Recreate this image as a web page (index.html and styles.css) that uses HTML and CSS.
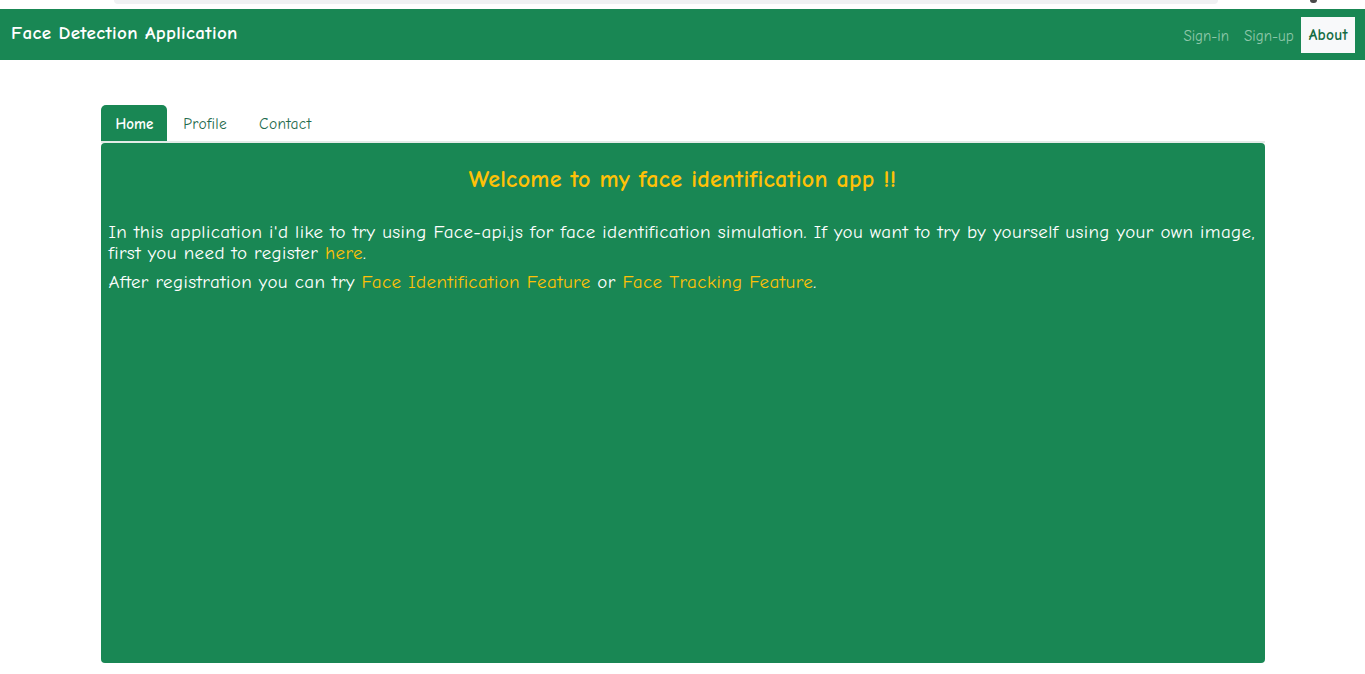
FILE: index.html
```html
<!DOCTYPE html>
<html>
<head>
<meta charset="utf-8">
<link rel="stylesheet" href="styles.css">
</head>
<body>
<div class="topstrip"><div class="topstrip-bar"></div><div class="topstrip-dot"></div></div>
<nav class="navbar">
  <div class="brand">Face Detection Application</div>
  <div class="navlinks">
    <a class="navlink">Sign-in</a>
    <a class="navlink">Sign-up</a>
    <a class="navlink active">About</a>
  </div>
</nav>
<main class="container">
  <ul class="tabs">
    <li class="tab active">Home</li>
    <li class="tab">Profile</li>
    <li class="tab">Contact</li>
  </ul>
  <section class="panel">
    <h2 class="title">Welcome to my face identification app !!</h2>
    <p class="text">In this application i'd like to try using Face-api.js for face identification simulation. If you want to try by yourself using your own image, first you need to register <a class="hl">here</a>.</p>
    <p class="text">After registration you can try <a class="hl">Face Identification Feature</a> or <a class="hl">Face Tracking Feature</a>.</p>
  </section>
</main>
</body>
</html>
```

FILE: styles.css
```css
* { box-sizing: border-box; }
body {
  margin: 0;
  background: #fff;
  font-family: "Comic Sans MS", "Comic Neue", "Open Sans", sans-serif;
}
.topstrip {
  height: 9px;
  display: flex;
  align-items: flex-start;
  padding-left: 114px;
}
.topstrip-bar {
  width: 1104px;
  height: 4px;
  background: #f0f1f3;
  border-radius: 0 0 6px 6px;
}
.topstrip-dot {
  width: 7px;
  height: 3px;
  margin-left: 92px;
  background: #4a4a4a;
  border-radius: 0 0 4px 4px;
}
.navbar {
  height: 51px;
  background: #198754;
  display: flex;
  align-items: flex-start;
  justify-content: space-between;
  padding: 0 10px 0 11px;
}
.brand {
  color: #fff;
  font-size: 19px;
  letter-spacing: 0.35px;
  font-weight: 600;
  padding-top: 12px;
  line-height: 24px;
}
.navlinks {
  display: flex;
  align-items: center;
  padding-top: 8px;
}
.navlink {
  color: #8fc7aa;
  font-size: 15px;
  padding: 9px 7px 7px;
  line-height: 19px;
}
.navlink:first-child {
  padding-right: 8px;
}
.navlink.active {
  background: #f8f9fa;
  color: #146c43;
  font-weight: 700;
  font-size: 15.5px;
  letter-spacing: 0.3px;
  padding: 9px 7px 8px 8px;
}
.container {
  width: 1164px;
  margin: 45px auto 0;
}
.tabs {
  list-style: none;
  margin: 0;
  padding: 0;
  display: flex;
  border-bottom: 2px solid #e3ebe7;
}
.tab {
  font-size: 15.5px;
  letter-spacing: 0.3px;
  color: #1f6b4d;
  padding: 10px 16px 7px 16px;
  line-height: 19px;
  border-radius: 5px 5px 0 0;
}
.tab.active {
  background: #198754;
  color: #fff;
  font-weight: 600;
  font-size: 15px;
  letter-spacing: 0;
  padding: 10px 14px 7px 15px;
}
.panel {
  background: #198754;
  border-radius: 4px;
  height: 520px;
  padding: 21px 8px 8px 8px;
}
.title {
  margin: 0 0 28px;
  text-align: center;
  color: #ffc107;
  font-size: 24px;
  letter-spacing: 0.25px;
  font-weight: 700;
  line-height: 30px;
}
.text {
  margin: 0 0 8px;
  color: #fff;
  font-size: 19px;
  letter-spacing: 0.4px;
  line-height: 21px;
}
.hl {
  color: #ffc107;
  display: inline-block;
  line-height: 21px;
}
```
